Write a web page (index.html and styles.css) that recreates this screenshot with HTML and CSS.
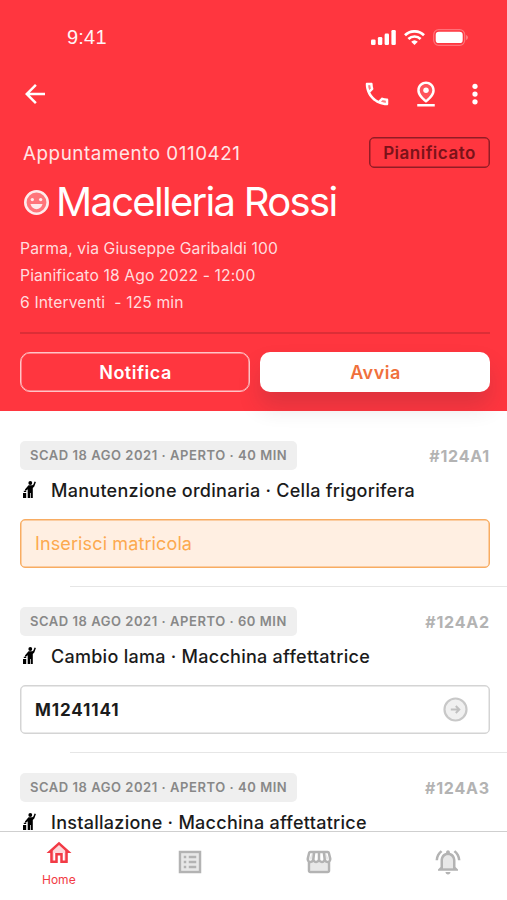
FILE: index.html
```html
<!DOCTYPE html>
<html lang="it">
<head>
    <meta charset="UTF-8">
    <meta name="viewport" content="width=device-width, initial-scale=1.0">
    <title>Appuntamento</title>
    <link rel="stylesheet" href="styles.css">
</head>
<body>
    <div class="app">
        <header class="header">
            <div class="statusbar">
                <span class="time">9:41</span>
                <div class="status-icons">
                    <svg width="25" height="15" viewBox="0 0 25 15" fill="#fff">
                        <rect x="0" y="9.5" width="4.6" height="5.5" rx="1.3"/>
                        <rect x="6.9" y="7" width="4.4" height="8" rx="1.3"/>
                        <rect x="13.6" y="3.6" width="4.4" height="11.4" rx="1.3"/>
                        <rect x="20.4" y="0" width="4.4" height="15" rx="1.3"/>
                    </svg>
                    <svg width="21" height="15" viewBox="0 0 21 15" fill="none" stroke="#fff" stroke-width="2.7">
                        <path d="M1 5.2a13.6 13.6 0 0 1 19 0"/>
                        <path d="M4.4 9a8.7 8.7 0 0 1 12.2 0"/>
                        <path d="M10.5 15 7.2 11.7a4.8 4.8 0 0 1 6.6 0z" fill="#fff" stroke="none"/>
                    </svg>
                    <svg width="35" height="17" viewBox="0 0 35 17">
                        <rect x=".7" y=".7" width="31" height="15.6" rx="5" fill="none" stroke="#fff" stroke-opacity=".3" stroke-width="1.2"/>
                        <rect x="2.7" y="2.7" width="27" height="11.4" rx="3.2" fill="#fff"/>
                        <path d="M33.2 6v5c1.1-.5 1.6-1.4 1.6-2.5S34.3 6.5 33.2 6z" fill="#fff" fill-opacity=".4"/>
                    </svg>
                </div>
            </div>

            <nav class="toolbar">
                <svg class="icon" viewBox="0 0 24 24" fill="#fff"><path d="M20 11H7.830l5.590-5.590L12 4l-8 8 8 8 1.410-1.410L7.830 13H20v-2z"/></svg>
                <div class="toolbar-actions">
                    <svg class="icon" viewBox="0 0 24 24" fill="#fff">
                        <path d="M6.540 5c.06.89.21 1.760.45 2.590l-1.200 1.200c-.41-1.200-.67-2.470-.76-3.790h1.510m9.860 12.020c.85.24 1.720.39 2.600.45v1.490c-1.320-.09-2.590-.35-3.800-.75l1.200-1.190" opacity=".35"/>
                        <path d="M7.500 3H4c-.55 0-1 .45-1 1 0 9.390 7.610 17 17 17 .55 0 1-.45 1-1v-3.490c0-.55-.45-1-1-1-1.240 0-2.450-.2-3.570-.57-.1-.04-.21-.05-.31-.05-.26 0-.51.1-.71.29l-2.200 2.200c-2.830-1.450-5.150-3.760-6.590-6.590l2.200-2.200c.28-.28.36-.67.25-1.020C8.700 6.450 8.500 5.250 8.500 4c0-.55-.45-1-1-1zM5.030 5h1.500c.07.88.22 1.750.46 2.590L5.790 8.800c-.41-1.210-.67-2.480-.76-3.800zM19 18.970c-1.320-.09-2.600-.35-3.800-.76l1.200-1.200c.85.24 1.720.39 2.600.45v1.510z"/>
                    </svg>
                    <svg class="icon" viewBox="0 0 24 24" fill="#fff">
                        <path d="M12 4C9.500 4 7 5.860 7 9.190c0 2.100 1.700 4.690 5 7.310 3.300-2.620 5-5.210 5-7.310C17 5.860 14.500 4 12 4z" opacity=".15"/>
                        <path d="M12 2c3.270 0 7 2.460 7 7.150 0 3.120-2.330 6.410-7 9.850-4.670-3.440-7-6.730-7-9.850C5 4.460 8.730 2 12 2zm0 2C9.500 4 7 5.770 7 9.150c0 2.200 1.700 4.660 5 7.350 3.300-2.690 5-5.150 5-7.350C17 5.770 14.500 4 12 4z"/>
                        <circle cx="12" cy="9" r="2.200"/>
                        <path d="M5 20h14v2H5z"/>
                    </svg>
                    <svg class="icon" viewBox="0 0 24 24" fill="#fff"><circle cx="12" cy="5.800" r="2.100"/><circle cx="12" cy="12" r="2.100"/><circle cx="12" cy="18.200" r="2.100"/></svg>
                </div>
            </nav>

            <div class="top-row">
                <span class="appointment">Appuntamento 0110421</span>
                <span class="badge">Pianificato</span>
            </div>
            <div class="title-row">
                <svg class="smile" viewBox="0 0 24 24" fill="#fff">
                    <circle cx="12" cy="12" r="10" opacity=".35"/>
                    <path d="M12 0a12 12 0 1 0 0 24 12 12 0 0 0 0-24zm0 21.500a9.500 9.500 0 1 1 0-19 9.500 9.500 0 0 1 0 19z"/>
                    <circle cx="8" cy="9.200" r="1.600"/><circle cx="16" cy="9.200" r="1.600"/>
                    <path d="M6.200 13.500h11.600c-.9 3.200-3.100 5-5.800 5s-4.900-1.800-5.800-5z"/>
                </svg>
                <h1>Macelleria Rossi</h1>
            </div>
            <div class="details">
                <p>Parma, via Giuseppe Garibaldi 100</p>
                <p>Pianificato 18 Ago 2022 - 12:00</p>
                <p>6 Interventi&nbsp; - 125 min</p>
            </div>
            <div class="buttons">
                <button class="btn btn-outline">Notifica</button>
                <button class="btn btn-white">Avvia</button>
            </div>
        </header>

        <main class="list">
            <section class="job">
                <div class="job-head"><span class="tag">SCAD 18 AGO 2021 · APERTO · 40 MIN</span><span class="code">#124A1</span></div>
                <div class="job-title">
                    <svg class="worker" viewBox="0 0 13 17"><use href="#worker"/></svg>
                    <span>Manutenzione ordinaria · Cella frigorifera</span>
                </div>
                <div class="field field-empty">Inserisci matricola</div>
            </section>
            <section class="job">
                <div class="job-head"><span class="tag">SCAD 18 AGO 2021 · APERTO · 60 MIN</span><span class="code">#124A2</span></div>
                <div class="job-title">
                    <svg class="worker" viewBox="0 0 13 17"><use href="#worker"/></svg>
                    <span>Cambio lama · Macchina affettatrice</span>
                </div>
                <div class="field">
                    <span>M1241141</span>
                    <svg width="25" height="25" viewBox="0 0 25 25">
                        <circle cx="12.500" cy="12.500" r="11" fill="#f0f0f0" stroke="#c8c8c8" stroke-width="2.200"/>
                        <path d="M7.800 12.500h8.500M12.800 9l3.500 3.500-3.500 3.500" fill="none" stroke="#c0c0c0" stroke-width="2"/>
                    </svg>
                </div>
            </section>
            <section class="job">
                <div class="job-head"><span class="tag">SCAD 18 AGO 2021 · APERTO · 40 MIN</span><span class="code">#124A3</span></div>
                <div class="job-title">
                    <svg class="worker" viewBox="0 0 13 17">
                        <g id="worker">
                            <circle cx="7.300" cy="2" r="1.900"/>
                            <path d="M11.600.6l1.300.5-1.600 4.500-1.500 1.500V17H7.700v-5H7v5H4.700V8.200L2.500 10l-.6-1.500L5.500 4.300h3.800l1.100-.9z"/>
                            <path d="M0 12h3.200v5H0zM.8 9.700h2.400V11H.8z"/>
                        </g>
                    </svg>
                    <span>Installazione · Macchina affettatrice</span>
                </div>
                <div class="field"></div>
            </section>
        </main>

        <footer class="tabbar">
            <a class="tab active">
                <svg class="icon" viewBox="0 0 24 24" fill="currentColor">
                    <path d="M5 10.500l7-6.300 7 6.300V19h-3v-7H8v7H5z" opacity=".2"/>
                    <path d="M12 3L2 12h3v8h6v-6h2v6h6v-8h3L12 3zm5 15h-2v-6H9v6H7v-7.810l5-4.500 5 4.500V18z"/>
                </svg>
                <span>Home</span>
            </a>
            <a class="tab">
                <svg class="icon" viewBox="0 0 24 24" fill="currentColor">
                    <path d="M5 5h14v14H5z" opacity=".3"/>
                    <path d="M3 3v18h18V3H3zm16 16H5V5h14v14zM11 7h6v2h-6V7zm0 4h6v2h-6v-2zm0 4h6v2h-6v-2zM7 7h2v2H7V7zm0 4h2v2H7v-2zm0 4h2v2H7v-2z"/>
                </svg>
            </a>
            <a class="tab">
                <svg class="icon" viewBox="0 0 24 24" fill="currentColor">
                    <path d="M5 12h14v7H5zM6.440 5h2L8 10H4zM17.500 5h-1.900l.6 5H20z" opacity=".3"/>
                    <path d="M21.900 8.890l-1.050-4.370c-.22-.9-1-1.520-1.910-1.520H5.050c-.9 0-1.690.63-1.900 1.520L2.100 8.890c-.24 1.020-.02 2.060.62 2.880.08.11.19.19.28.29V19c0 1.100.9 2 2 2h14c1.100 0 2-.9 2-2v-6.940c.09-.09.2-.18.28-.28.64-.82.87-1.870.62-2.890zm-2.990-3.900l1.050 4.370c.1.42.01.84-.25 1.170-.14.18-.44.47-.94.47-.61 0-1.140-.49-1.210-1.140L16.980 5l1.930-.01zM13 5h1.960l.54 4.520c.05.39-.07.78-.33 1.070-.22.26-.54.41-.95.41-.67 0-1.220-.59-1.220-1.310V5zM8.490 9.520L9.040 5H11v4.690c0 .72-.55 1.310-1.290 1.310-.34 0-.65-.15-.89-.41-.25-.29-.37-.68-.33-1.070zm-4.450-.16L5.050 5h1.970l-.58 4.860c-.08.65-.6 1.140-1.210 1.140-.49 0-.8-.29-.93-.47-.27-.32-.36-.75-.26-1.170zM5 19v-6.030c.08.01.15.03.23.03.87 0 1.660-.36 2.240-.95.6.6 1.400.95 2.310.95.870 0 1.650-.36 2.230-.93.590.57 1.390.93 2.290.93.840 0 1.640-.35 2.240-.95.580.59 1.370.95 2.240.95.080 0 .15-.02.23-.03V19H5z"/>
                </svg>
            </a>
            <a class="tab">
                <svg class="icon" viewBox="0 0 24 24" fill="currentColor">
                    <path d="M12 6.500c-2.490 0-4 2.020-4 4.500v6h8v-6c0-2.480-1.510-4.500-4-4.500z" opacity=".3"/>
                    <path d="M12 22c1.100 0 2-.9 2-2h-4c0 1.100.9 2 2 2zm6-6v-5c0-3.070-1.630-5.640-4.500-6.320V4c0-.83-.67-1.500-1.500-1.500s-1.500.67-1.500 1.500v.68C7.640 5.360 6 7.920 6 11v5l-2 2v1h16v-1l-2-2zm-2 1H8v-6c0-2.480 1.510-4.500 4-4.500s4 2.020 4 4.500v6zM7.580 4.080L6.150 2.650C3.750 4.480 2.170 7.300 2.030 10.500h2c.15-2.650 1.510-4.970 3.550-6.420zm12.390 6.420h2c-.15-3.200-1.730-6.020-4.120-7.850l-1.420 1.430c2.020 1.450 3.390 3.770 3.540 6.420z"/>
                </svg>
            </a>
        </footer>
    </div>
</body>
</html>
```

FILE: styles.css
```css
* {
    box-sizing: border-box;
    margin: 0;
    padding: 0;
}

body {
    font-family: Inter, "Liberation Sans", sans-serif;
    background-color: #fff;
    color: #1b1b1b;
}

svg {
    display: block;
    flex-shrink: 0;
}

.app {
    height: 900px;
    display: flex;
    flex-direction: column;
    overflow: hidden;
}

/* Header */
.header {
    height: 411px;
    flex-shrink: 0;
    background-color: #ff363f;
    color: #fff;
    padding: 0 17px 0 20px;
}

.statusbar {
    height: 74px;
    display: flex;
    justify-content: space-between;
    align-items: center;
    padding: 0 22px 0 47px;
}

.time {
    font-family: "Liberation Sans", Arial, sans-serif;
    font-size: 20px;
    letter-spacing: 0.2px;
    opacity: 0.95;
}

.status-icons {
    display: flex;
    align-items: center;
    gap: 8px;
}

.toolbar {
    height: 40px;
    display: flex;
    justify-content: space-between;
    align-items: center;
}

.toolbar-actions {
    display: flex;
    gap: 19px;
}

.icon {
    width: 30px;
    height: 30px;
}

.top-row {
    height: 32px;
    margin-top: 23px;
    display: flex;
    justify-content: space-between;
    align-items: center;
    padding-left: 3px;
}

.appointment {
    font-size: 18.8px;
    letter-spacing: 0.57px;
    opacity: 0.87;
}

.badge {
    width: 121px;
    height: 31px;
    align-self: flex-start;
    border: 1px solid #921c25;
    box-shadow: inset 0 0 0 0.5px #921c25;
    border-radius: 5px;
    color: #7a1219;
    font-size: 17px;
    font-weight: 600;
    letter-spacing: 0.5px;
    text-align: center;
    line-height: 31px;
}

.title-row {
    height: 50px;
    margin-top: 8px;
    display: flex;
    align-items: center;
    padding-left: 4px;
    gap: 7px;
}

.smile {
    width: 25px;
    height: 25px;
    opacity: 0.9;
}

h1 {
    font-size: 40px;
    font-weight: 370;
    letter-spacing: -1.7px;
    line-height: 50px;
}

.details {
    margin-top: 8px;
    height: 99px;
    border-bottom: 2px solid #dc2e37;
    font-size: 15.7px;
    line-height: 27px;
    letter-spacing: 0.12px;
    color: #ffdcde;
}

.buttons {
    display: flex;
    gap: 10px;
    margin-top: 18px;
}

.btn {
    width: 230px;
    height: 40px;
    border-radius: 10px;
    padding-left: 1px;
    font-family: inherit;
    font-size: 18px;
    font-weight: 600;
    letter-spacing: 0.5px;
}

.btn-outline {
    background: none;
    border: 1px solid #ffc4c7;
    box-shadow: inset 0 0 0 0.5px #ffc4c7;
    color: #fff;
}

.btn-white {
    background-color: #fff;
    border: 0;
    color: #f0703c;
    box-shadow: 0 14px 22px rgba(60, 40, 60, 0.17);
}

/* Job list */
.list {
    flex: 1;
    min-height: 0;
    overflow: hidden;
    padding-top: 30px;
}

.job {
    height: 166px;
    padding: 0 17px 0 20px;
    background: linear-gradient(#e6e6e6, #e6e6e6) no-repeat 70px 145px / 100% 1px;
}

.job-head {
    display: flex;
    justify-content: space-between;
    align-items: center;
}

.tag {
    width: 277px;
    height: 29px;
    border-radius: 5px;
    background-color: #efefef;
    color: #888;
    font-size: 13px;
    font-weight: 600;
    letter-spacing: 0.54px;
    line-height: 29px;
    padding-left: 10px;
    white-space: nowrap;
}

.code {
    color: #b3b3b3;
    font-size: 16px;
    font-weight: 650;
    letter-spacing: 0.8px;
}

.job-title {
    height: 40px;
    display: flex;
    align-items: center;
    gap: 15px;
    padding-left: 3px;
    font-size: 18px;
    font-weight: 450;
    letter-spacing: 0.27px;
}

.worker {
    width: 13px;
    height: 17px;
    margin-top: -2px;
}

.field {
    height: 49px;
    margin-top: 9px;
    border: 1px solid #d4d4d4;
    box-shadow: inset 0 0 0 0.5px #d4d4d4;
    border-radius: 5px;
    display: flex;
    justify-content: space-between;
    align-items: center;
    padding: 0 21px 0 14px;
    font-size: 17px;
    font-weight: 700;
    letter-spacing: 0.9px;
}

.field-empty {
    border-color: #f8ac62;
    box-shadow: inset 0 0 0 0.5px #f8ac62;
    background-color: #ffefe2;
    color: #fca94f;
    font-size: 18px;
    font-weight: 400;
    letter-spacing: 0.12px;
}

/* Bottom tabs */
.tabbar {
    height: 69px;
    flex-shrink: 0;
    border-top: 1px solid #cfcfcf;
    background-color: #fff;
    display: flex;
    justify-content: space-between;
    padding: 0 44px 0 42px;
}

.tab {
    height: 60px;
    display: flex;
    flex-direction: column;
    align-items: center;
    justify-content: center;
    color: #b3b3b3;
}

.active {
    height: 61px;
    color: #f23a45;
    font-size: 12px;
    gap: 4px;
}
```
